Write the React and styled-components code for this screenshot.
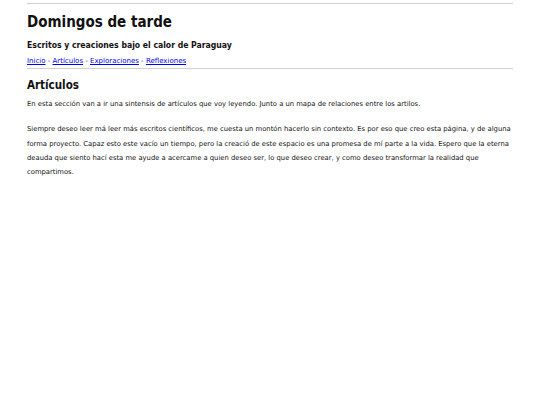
import React from "react";
import styled, { createGlobalStyle } from "styled-components";

const GlobalStyle = createGlobalStyle`
  html, body {
    margin: 0;
    padding: 0;
    background: #ffffff;
  }
  body {
    font-family: "DejaVu Sans", Verdana, sans-serif;
    color: #111111;
  }
`;

const Page = styled.div`
  width: 90%;
  margin: 0 auto;
  padding-top: 3px;
`;

const Header = styled.header`
  border-top: 1px solid #d0d0d0;
  border-bottom: 1px solid #d0d0d0;
  padding: 8px 0 2px;
`;

const Heading = styled.h1`
  font-family: "DejaVu Sans Condensed", "DejaVu Sans", sans-serif;
  font-stretch: condensed;
  font-weight: bold;
  font-size: ${(p) => p.$size}px;
  line-height: ${(p) => p.$lh}px;
  margin: 0 0 ${(p) => p.$mb}px;
`;

const Nav = styled.nav`
  font-size: 7px;
  line-height: 10px;
  color: #333;
  a {
    color: #0000ee;
  }
`;

const Section = styled.section`
  padding-top: 8px;
`;

const Paragraph = styled.p`
  font-size: 6.8px;
  line-height: 14.33px;
  margin: 0 0 11px;
`;

const links = ["Inicio", "Artículos", "Exploraciones", "Reflexiones"];

export default function App() {
  return (
    <>
      <GlobalStyle />
      <Page>
        <Header>
          <Heading $size={15} $lh={20} $mb={7}>
            Domingos de tarde
          </Heading>
          <Heading as="h2" $size={8.6} $lh={12} $mb={5}>
            Escritos y creaciones bajo el calor de Paraguay
          </Heading>
          <Nav>
            {links.map((l, i) => (
              <React.Fragment key={l}>
                {i > 0 && " - "}
                <a href="#">{l}</a>
              </React.Fragment>
            ))}
          </Nav>
        </Header>
        <Section>
          <Heading as="h2" $size={11.5} $lh={16} $mb={4}>
            Artículos
          </Heading>
          <Paragraph>
            En esta sección van a ir una sintensis de artículos que voy leyendo.
            Junto a un mapa de relaciones entre los artilos.
          </Paragraph>
          <Paragraph>
            Siempre deseo leer má leer más escritos científicos, me cuesta un
            montón hacerlo sin contexto. Es por eso que creo esta página, y de
            alguna forma proyecto. Capaz esto este vacío un tiempo, pero la
            creació de este espacio es una promesa de mí parte a la vida. Espero
            que la eterna deauda que siento hací esta me ayude a acercame a
            quien deseo ser, lo que deseo crear, y como deseo transformar la
            realidad que compartimos.
          </Paragraph>
        </Section>
      </Page>
    </>
  );
}
